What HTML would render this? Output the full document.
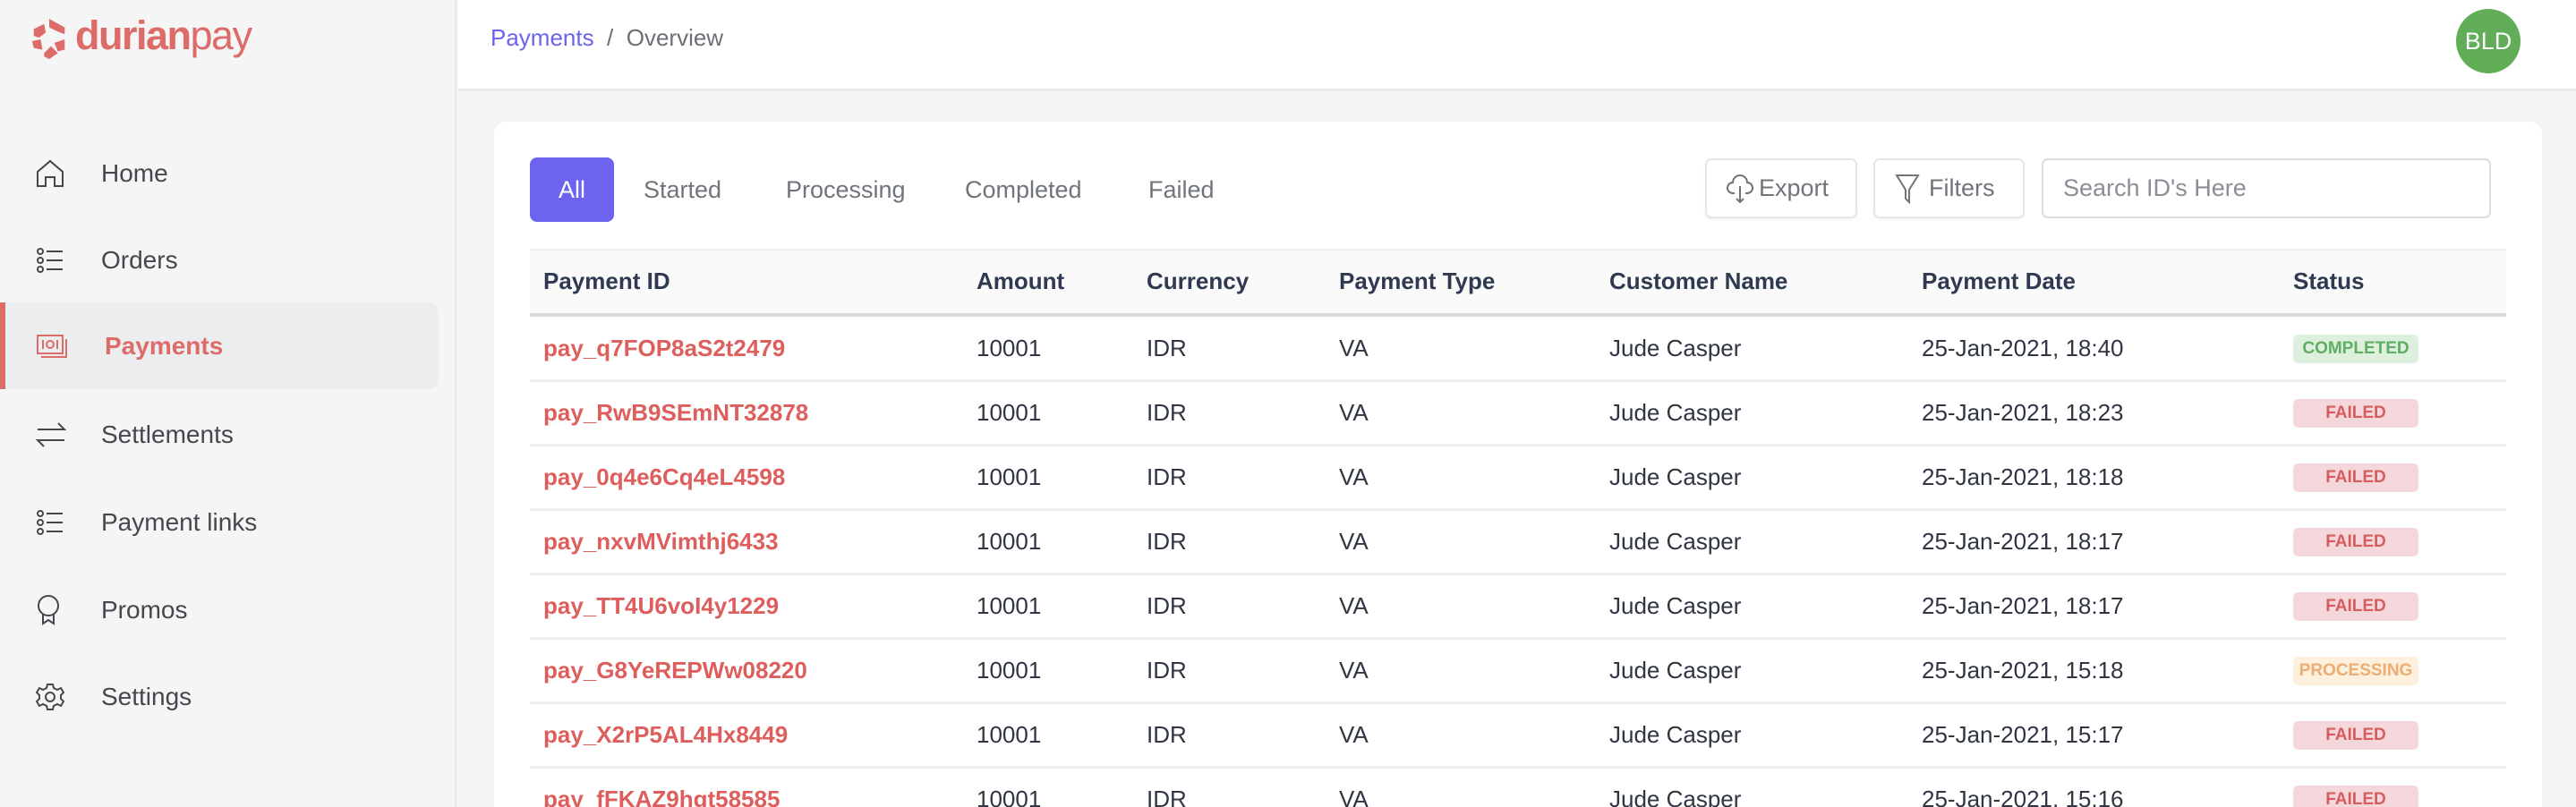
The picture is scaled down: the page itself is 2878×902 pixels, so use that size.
<!DOCTYPE html>
<html style="width:2878px;height:902px;overflow:hidden"><head><meta charset="utf-8">
<style>
*{margin:0;padding:0;box-sizing:border-box}
body{width:2878px;height:902px;overflow:hidden;background:#f4f4f4;font-family:"Liberation Sans",sans-serif;position:relative}
.sb{position:absolute;left:0;top:0;width:510px;height:902px;background:#f5f5f5;border-right:2px solid #e6e6e6}
.logo{position:absolute;left:35px;top:21px}
.logotxt{position:absolute;left:84px;top:14px;font-size:45px;color:#dd6b68;letter-spacing:-1.5px}
.nav{position:absolute;left:0;width:490px;height:97px;display:flex;align-items:center;font-size:28px;color:#44474d}
.nav svg{position:absolute;left:40px}
.nav span{position:absolute;left:113px}
.act{background:#ecedef;border-radius:0 10px 10px 0;color:#dd6b68;font-weight:bold}
.act:before{content:"";position:absolute;left:0;top:0;width:6px;height:97px;background:#dd6b68}
.hdr{position:absolute;left:512px;top:0;right:0;height:102px;background:#fff;border-bottom:3px solid #e8e8e8}
.bc{position:absolute;left:36px;top:27px;font-size:26px;color:#6b6f76}
.bc b{font-weight:normal;color:#6c63ee}
.av{position:absolute;left:2744px;top:10px;width:72px;height:72px;border-radius:50%;background:#62ad58;color:#fff;font-size:27px;display:flex;align-items:center;justify-content:center}
.card{position:absolute;left:552px;top:136px;width:2288px;height:766px;background:#fff;border-radius:14px 14px 0 0}
.tab{position:absolute;top:176px;height:72px;font-size:27px;color:#70747b;display:flex;align-items:center}
.all{left:592px;width:94px;background:#6c63ee;color:#fff;border-radius:8px;justify-content:center}
.btn{position:absolute;top:177px;height:67px;border:2px solid #e6e6ea;border-radius:7px;background:#fff;font-size:27px;color:#70747b;display:flex;align-items:center;box-shadow:0 2px 3px rgba(0,0,0,.05)}
.th{position:absolute;left:592px;top:278px;width:2208px;height:76px;background:#fafafa;border-top:2px solid #ededed;border-bottom:4px solid #d9dadf}
.c{position:absolute;font-size:26px;color:#2f3542;white-space:nowrap}
.h{font-weight:bold;color:#2f3a52;font-size:26px}
.id{color:#dd5e5c;font-weight:bold}
.line{position:absolute;left:592px;width:2208px;height:3px;background:#eeeeee}
.bd{position:absolute;left:2562px;width:140px;height:32px;border-radius:6px;font-size:19px;font-weight:bold;display:flex;align-items:center;justify-content:center}
.f{background:#f3d7db;color:#d85c5f}
.ok{background:#ddf0de;color:#5fae62}
.p{background:#fdf0dd;color:#ecae72}
</style></head><body>
<div class="sb">
 <svg class="logo" width="40" height="46" viewBox="0 0 40 48"><g fill="#dd6b68"><polygon points="20,0 38,10 38,18 28,14 20,10"/><polygon points="2,12 14,6 16,16 8,22 2,20"/><polygon points="0,26 10,24 12,36 2,34"/><polygon points="14,40 22,32 30,40 20,47 14,44"/><polygon points="38,24 38,36 30,38 26,28"/></g></svg>
 <div class="logotxt"><b>durian</b>pay</div>
 <div class="nav" style="top:145px"><svg width="32" height="32" viewBox="0 0 32 32" fill="none" stroke="#44474d" stroke-width="2"><path d="M2 30V14L16 2l14 12v16h-9V20h-10v10z"/></svg><span>Home</span></div>
 <div class="nav" style="top:242px"><svg width="32" height="28" viewBox="0 0 32 28" fill="none" stroke="#44474d" stroke-width="2"><circle cx="5" cy="4" r="3"/><circle cx="5" cy="14" r="3"/><circle cx="5" cy="24" r="3"/><path d="M12 4h18M12 14h18M12 24h18"/></svg><span>Orders</span></div>
 <div class="nav act" style="top:338px"><svg width="36" height="28" viewBox="0 0 36 28" fill="none" stroke="#dd6b68" stroke-width="2"><rect x="2" y="2" width="28" height="20"/><path d="M34 6v20H6"/><path d="M8 7v10M24 7v10"/><circle cx="16" cy="12" r="4"/></svg><span style="left:117px">Payments</span></div>
 <div class="nav" style="top:437px"><svg width="34" height="32" viewBox="0 0 34 32" fill="none" stroke="#44474d" stroke-width="2"><path d="M2 10h30l-7-7M32 22H2l7 7"/></svg><span>Settlements</span></div>
 <div class="nav" style="top:535px"><svg width="32" height="28" viewBox="0 0 32 28" fill="none" stroke="#44474d" stroke-width="2"><circle cx="5" cy="4" r="3"/><circle cx="5" cy="14" r="3"/><circle cx="5" cy="24" r="3"/><path d="M12 4h18M12 14h18M12 24h18"/></svg><span>Payment links</span></div>
 <div class="nav" style="top:633px"><svg width="28" height="34" viewBox="0 0 28 34" fill="none" stroke="#44474d" stroke-width="2"><circle cx="14" cy="12" r="11"/><path d="M8 22v10l6-4 6 4V22"/></svg><span>Promos</span></div>
 <div class="nav" style="top:730px"><svg width="32" height="32" viewBox="0 0 32 32" fill="none" stroke="#44474d" stroke-width="2"><circle cx="16" cy="16" r="5"/><path d="M13 2h6l1 4 4 2 4-2 3 5-3 3v4l3 3-3 5-4-2-4 2-1 4h-6l-1-4-4-2-4 2-3-5 3-3v-4l-3-3 3-5 4 2 4-2z"/></svg><span>Settings</span></div>
</div>
<div class="hdr"><div class="bc"><b>Payments</b> &nbsp;/&nbsp; Overview</div></div>
<div class="av">BLD</div>
<div class="card"></div>
<div class="tab all">All</div>
<div class="tab" style="left:719px">Started</div>
<div class="tab" style="left:878px">Processing</div>
<div class="tab" style="left:1078px">Completed</div>
<div class="tab" style="left:1283px">Failed</div>
<div class="btn" style="left:1905px;width:170px;padding-left:22px"><svg width="30" height="34" viewBox="0 0 30 34" fill="none" stroke="#70747b" stroke-width="2"><path d="M9 22H7a6 6 0 0 1 0-12 8 8 0 0 1 16 0 6 6 0 0 1 0 12h-2M15 14v18M11 28l4 4 4-4"/></svg><span style="margin-left:6px">Export</span></div>
<div class="btn" style="left:2093px;width:169px;padding-left:22px"><svg width="28" height="34" viewBox="0 0 28 34" fill="none" stroke="#70747b" stroke-width="2"><path d="M2 2h24L16 18v14l-4-4V18z"/></svg><span style="margin-left:10px">Filters</span></div>
<div class="btn" style="left:2281px;width:502px;padding-left:22px;color:#8a8e96;box-shadow:none;border-color:#dcdde2">Search ID's Here</div>
<div class="th"></div>
<div class="c h" style="left:607px;top:299px">Payment ID</div>
<div class="c h" style="left:1091px;top:299px">Amount</div>
<div class="c h" style="left:1281px;top:299px">Currency</div>
<div class="c h" style="left:1496px;top:299px">Payment Type</div>
<div class="c h" style="left:1798px;top:299px">Customer Name</div>
<div class="c h" style="left:2147px;top:299px">Payment Date</div>
<div class="c h" style="left:2562px;top:299px">Status</div>
<div id="rows"></div>
<script>
var d=[["pay_q7FOP8aS2t2479","18:40","ok","COMPLETED"],["pay_RwB9SEmNT32878","18:23","f","FAILED"],["pay_0q4e6Cq4eL4598","18:18","f","FAILED"],["pay_nxvMVimthj6433","18:17","f","FAILED"],["pay_TT4U6voI4y1229","18:17","f","FAILED"],["pay_G8YeREPWw08220","15:18","p","PROCESSING"],["pay_X2rP5AL4Hx8449","15:17","f","FAILED"],["pay_fFKAZ9hgt58585","15:16","f","FAILED"]];
var h="";d.forEach(function(r,i){var y=374+i*72;
h+='<div class="c id" style="left:607px;top:'+y+'px">'+r[0]+'</div><div class="c" style="left:1091px;top:'+y+'px">10001</div><div class="c" style="left:1281px;top:'+y+'px">IDR</div><div class="c" style="left:1496px;top:'+y+'px">VA</div><div class="c" style="left:1798px;top:'+y+'px">Jude Casper</div><div class="c" style="left:2147px;top:'+y+'px">25-Jan-2021, '+r[1]+'</div><div class="bd '+r[2]+'" style="top:'+y+'px">'+r[3]+'</div>'+(i<7?'<div class="line" style="top:'+(424+i*72)+'px"></div>':'');});
document.getElementById("rows").innerHTML=h;
</script>
</body></html>
